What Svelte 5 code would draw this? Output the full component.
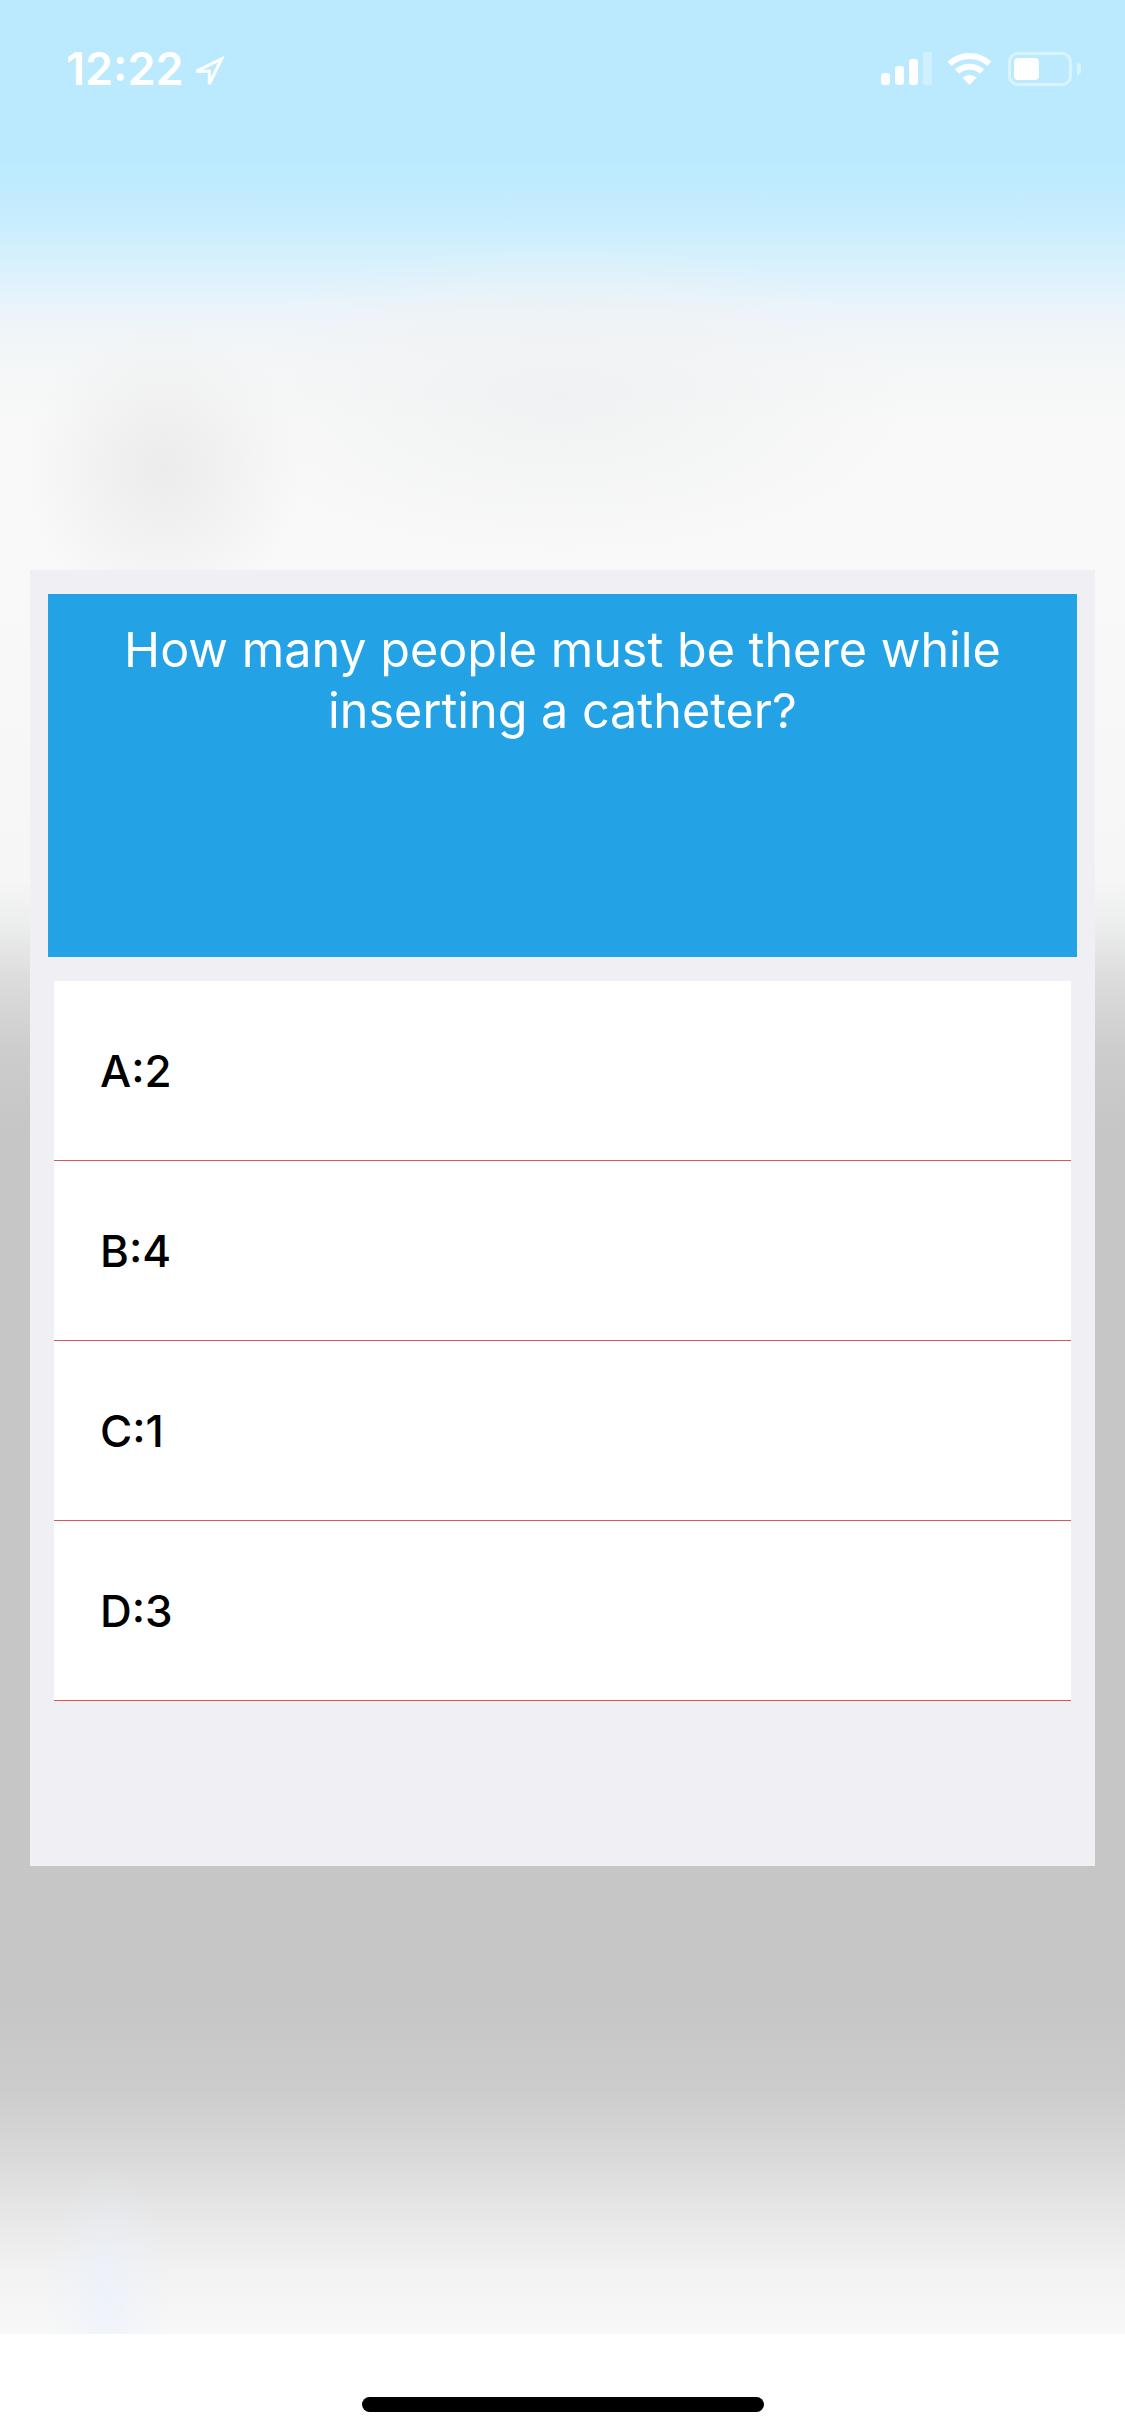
<script lang="ts">
  const question = 'How many people must be there while inserting a catheter?'
  const answers = ['A:2', 'B:4', 'C:1', 'D:3']
</script>

<div class="screen">
  <div class="backdrop">
    <header class="status">
      <div class="clock">
        <span class="time">12:22</span>
        <svg class="arrow" width="33" height="32" viewBox="0 0 33 32">
          <path d="M4.500 15.200 L29.500 3 L17.300 28 L17.300 15.200 Z" fill="none" stroke="#fff" stroke-width="3" />
        </svg>
      </div>
      <div class="indicators">
        <svg width="51" height="33" viewBox="0 0 51 33" fill="#fff">
          <rect x="0" y="21" width="9" height="12" rx="3" />
          <rect x="14" y="14" width="9" height="19" rx="3" />
          <rect x="28" y="7" width="9" height="26" rx="3" />
          <rect x="42" y="0" width="9" height="33" rx="3" opacity="0.3" />
        </svg>
        <svg width="45" height="33" viewBox="0 0 45 33" fill="none" stroke="#fff" stroke-width="6">
          <path d="M2.600 11.800 A29 29 0 0 1 42.400 11.800" />
          <path d="M10 19.500 A18.500 18.500 0 0 1 35 19.500" />
          <path d="M22.500 33 L15.500 25.500 Q22.500 20.500 29.500 25.500 Z" fill="#fff" stroke="none" />
        </svg>
        <div class="battery">
          <div class="cell"><div class="charge"></div></div>
          <div class="nub"></div>
        </div>
      </div>
    </header>

    <main class="card">
      <div class="question">{question}</div>
      <ul class="answers">
        {#each answers as answer (answer)}
          <li class="answer">{answer}</li>
        {/each}
      </ul>
    </main>
  </div>
  <footer class="home">
    <div class="home-bar"></div>
  </footer>
</div>

<style>
  :global(body) {
    margin: 0;
    background: #fff;
  }
  .screen {
    width: 1125px;
    height: 2436px;
    display: flex;
    flex-direction: column;
    font-family: Inter, "Liberation Sans", sans-serif;
    overflow: hidden;
  }
  .backdrop {
    height: 2334px;
    background-color: #f8f8f8;
    background-image:
      radial-gradient(ellipse 140px 150px at 163px 468px, #ececec 0%, #f0f0f0 35%, rgba(246, 246, 246, 0) 100%),
      radial-gradient(ellipse 360px 160px at 560px 400px, rgba(240, 241, 242, 0.95) 0%, rgba(244, 245, 245, 0) 100%),
      radial-gradient(ellipse 65px 130px at 108px 2295px, rgba(232, 240, 255, 0.55) 0%, rgba(235, 240, 250, 0) 100%),
      linear-gradient(
        180deg,
        #bbeaff 0,
        #bbeaff 160px,
        #c6edfe 215px,
        #d8f1fd 265px,
        #ebf4fb 310px,
        #f3f6f8 350px,
        #f8f9f8 420px,
        #f9f9f9 570px,
        #f6f6f6 880px,
        #eceded 925px,
        #dcdcdc 980px,
        #cdcdcd 1050px,
        #c6c6c6 1130px,
        #c6c6c6 2000px,
        #cccccc 2090px,
        #d8d8d8 2150px,
        #e6e6e6 2210px,
        #f2f2f2 2270px,
        #f8f8f8 2334px
      );
  }
  .status {
    height: 137px;
    box-sizing: border-box;
    padding: 52px 44px 0 66px;
    display: flex;
    justify-content: space-between;
    align-items: flex-start;
  }
  .clock {
    display: flex;
    align-items: flex-start;
    gap: 8px;
  }
  .time {
    font-size: 45px;
    line-height: 33px;
    font-weight: 600;
    color: #fff;
  }
  .arrow {
    margin-top: 4px;
  }
  .indicators {
    display: flex;
    align-items: flex-start;
    gap: 15px;
  }
  .battery {
    margin-left: 1px;
    display: flex;
    align-items: center;
    gap: 5px;
  }
  .cell {
    width: 64px;
    height: 34px;
    box-sizing: border-box;
    border: 3px solid rgba(255, 255, 255, 0.45);
    border-radius: 10px;
    padding: 3px;
  }
  .charge {
    width: 25px;
    height: 22px;
    background: #fff;
    border-radius: 4px;
  }
  .nub {
    width: 4px;
    height: 12px;
    background: rgba(255, 255, 255, 0.45);
    border-radius: 0 6px 6px 0;
  }
  .card {
    margin: 433px 30px 0;
    height: 1296px;
    box-sizing: border-box;
    padding: 24px 18px 0;
    background: #efeff4;
  }
  .question {
    height: 363px;
    box-sizing: border-box;
    padding: 25px 40px 0;
    background: #23a2e6;
    color: #fff;
    font-size: 48.500px;
    font-weight: 370;
    line-height: 61px;
    text-align: center;
  }
  .answers {
    list-style: none;
    margin: 24px 6px 0;
    padding: 0;
  }
  .answer {
    height: 180px;
    box-sizing: border-box;
    padding-left: 46px;
    display: flex;
    align-items: center;
    background: #fff;
    border-bottom: 1.500px solid #d9575a;
    color: #000;
    font-size: 44px;
    font-weight: 550;
  }
  .home {
    flex: 1;
    background: #fff;
    display: flex;
    justify-content: center;
    padding-top: 63px;
    box-sizing: border-box;
  }
  .home-bar {
    width: 402px;
    height: 15px;
    border-radius: 8px;
    background: #000;
  }
</style>
